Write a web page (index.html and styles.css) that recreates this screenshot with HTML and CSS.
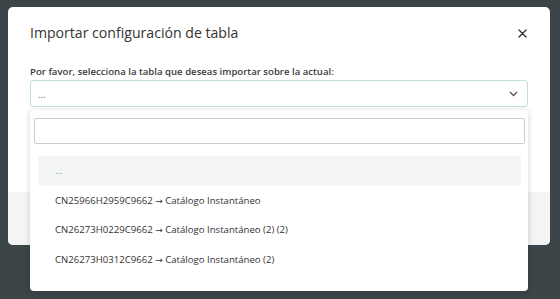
FILE: index.html
```html
<!DOCTYPE html>
<html lang="es">
<head>
    <meta charset="UTF-8">
    <title>Importar configuración de tabla</title>
    <link rel="stylesheet" href="styles.css">
</head>
<body>
    <div class="modal">
        <div class="modal-header">
            <h2 class="modal-title">Importar configuración de tabla</h2>
            <button class="close">
                <svg width="9" height="9" viewBox="0 0 9 9"><path d="M1 1L8 8M8 1L1 8" stroke="#333" stroke-width="1.4" stroke-linecap="round"/></svg>
            </button>
        </div>
        <div class="modal-body">
            <label class="label">Por favor, selecciona la tabla que deseas importar sobre la actual:</label>
            <div class="select-wrap">
                <div class="select">
                    <span class="select-value">...</span>
                    <svg class="chevron" width="9" height="6" viewBox="0 0 9 6"><path d="M1 1l3.5 3.5L8 1" fill="none" stroke="#555" stroke-width="1.3"/></svg>
                </div>
                <div class="dropdown">
                    <div class="search"></div>
                    <ul class="options">
                        <li class="option active">...</li>
                        <li class="option">CN25966H2959C9662 <span class="arrow">→</span> Catálogo Instantáneo</li>
                        <li class="option">CN26273H0229C9662 <span class="arrow">→</span> Catálogo Instantáneo (2) (2)</li>
                        <li class="option">CN26273H0312C9662 <span class="arrow">→</span> Catálogo Instantáneo (2)</li>
                    </ul>
                </div>
            </div>
        </div>
        <div class="modal-footer"></div>
    </div>
</body>
</html>
```

FILE: styles.css
```css
body {
    margin: 0;
    background: #3c4648;
    font-family: "Open Sans", sans-serif;
    color: #333;
    height: 299px;
    overflow: hidden;
}
.modal {
    margin: 7px 0 0 8px;
    width: 542px;
    background: #fff;
    border-radius: 5px;
}
.modal-header {
    display: flex;
    align-items: center;
    justify-content: space-between;
    padding: 15px 23px 0 22px;
    height: 22px;
}
.modal-title {
    margin: 0;
    font-size: 14.1px;
    font-weight: 400;
    line-height: 22px;
    color: #333;
}
.close {
    border: none;
    background: none;
    padding: 0;
    width: 9px;
    height: 9px;
    display: flex;
}
.modal-body {
    padding: 20px 22px 0 22px;
    height: 128px;
}
.label {
    display: block;
    font-size: 9.6px;
    font-weight: 600;
    line-height: 16px;
    color: #3a3a3a;
    margin-bottom: 0;
}
.select-wrap {
    position: relative;
}
.select {
    display: flex;
    align-items: center;
    justify-content: space-between;
    height: 25px;
    padding: 0 9px 0 7px;
    border: 1px solid #bfe2d8;
    border-radius: 3px;
}
.select-value {
    font-size: 9.6px;
    color: #666;
    margin-top: 2px;
}
.dropdown {
    position: absolute;
    top: 30px;
    left: 0;
    width: 498px;
    height: 181px;
    background: #fff;
    border-radius: 4px;
    box-shadow: 0 1px 6px rgba(0, 0, 0, 0.18);
    box-sizing: border-box;
    padding: 8px 3px 0 4px;
}
.search {
    height: 24px;
    border: 1px solid #ccc;
    border-radius: 2px;
}
.options {
    list-style: none;
    margin: 0;
    padding: 12px 4px 0 4px;
}
.option {
    height: 29.5px;
    line-height: 29.5px;
    padding-left: 17px;
    font-size: 9.6px;
    color: #333;
    white-space: nowrap;
}
.option .arrow {
    font-family: "DejaVu Sans", sans-serif;
    font-size: 9px;
}
.option.active {
    background: #f5f5f5;
    color: #4aae9b;
    border-radius: 2px;
}
.modal-footer {
    height: 53px;
    background: #f4f4f4;
    border-radius: 0 0 5px 5px;
}
```
